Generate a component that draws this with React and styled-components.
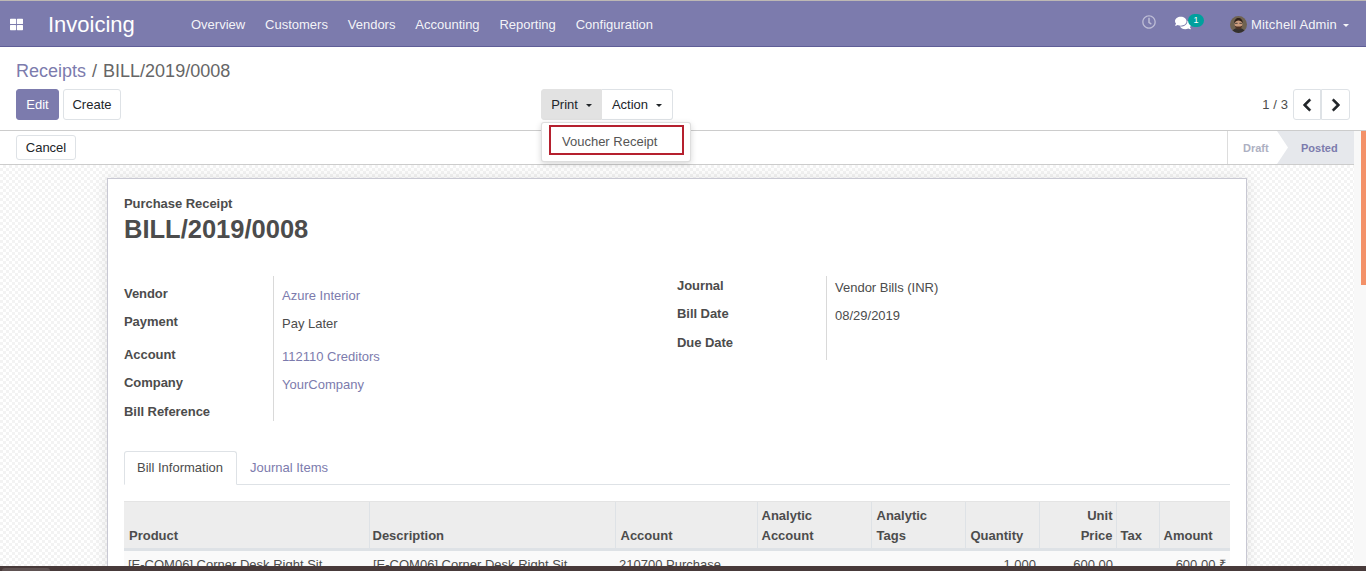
import React from "react";
import styled, { createGlobalStyle } from "styled-components";
import { FaThLarge, FaRegClock, FaComments, FaChevronLeft, FaChevronRight } from "react-icons/fa";

const Global = createGlobalStyle`
  html, body { margin: 0; padding: 0; height: 100%; overflow: hidden; }
  body { font-family: "Liberation Sans", Arial, sans-serif; font-size: 13px; color: #4c4c4c; background: #fff; }
  #root { height: 571px; }
  * { box-sizing: border-box; }
`;

const Page = styled.div`
  height: 571px; display: flex; flex-direction: column; overflow: hidden;
  border-top: 1px solid #bdb8b4;
`;
const Navbar = styled.header`
  height: 46px; flex: none; background: #7c7bad; border-bottom: 1px solid #5f5e97;
  display: flex; align-items: center; color: #fff; padding: 2px 0 0 10px;
`;
const AppsIcon = styled.span`
  width: 13px; display: flex; color: #fff; font-size: 13px; margin-right: 25px;
`;
const Brand = styled.span`
  font-size: 22px; width: 143px; line-height: 1; color: #fff;
`;
const NavMenu = styled.nav`display: flex; gap: 19.85px;`;
const NavLink = styled.span`color: rgba(255,255,255,.93); line-height: 18px;`;
const NavRight = styled.div`margin-left: auto; display: flex; align-items: center; padding-right: 17px;`;
const Clock = styled.span`display: flex; font-size: 14px; color: rgba(255,255,255,.5); margin: 0 19px 6px 0;`;
const Messages = styled.span`position: relative; display: flex; font-size: 16px; color: #fff; margin: 0 39px 4px 0;`;
const Badge = styled.span`
  position: absolute; left: 13px; top: -1px; width: 16px; height: 13px; border-radius: 7px;
  background: #00a09d; color: #fff; font-size: 9px; line-height: 13px; text-align: center;
`;
const Avatar = styled.svg`width: 17px; height: 17px; border-radius: 50%; margin-right: 4px; flex: none;`;
const UserName = styled.span`color: rgba(255,255,255,.93); letter-spacing: .15px;`;
const Caret = styled.span`
  display: inline-block; margin-left: ${p => p.$gap || 8}px; border-top: 3.5px solid currentColor;
  border-left: 3.5px solid transparent; border-right: 3.5px solid transparent; vertical-align: 2px;
`;

const ControlPanel = styled.section`
  height: 84px; flex: none; border-bottom: 1px solid #ccc; padding: 12px 16px 0; position: relative;
`;
const Breadcrumb = styled.div`font-size: 18px; line-height: 24px; color: #666; white-space: pre;`;
const CrumbLink = styled.span`color: #7c7bad;`;
const CrumbSep = styled.span`padding: 0 1px;`;
const ButtonRow = styled.div`display: grid; grid-template-columns: 525px 1fr auto; margin-top: 6px; align-items: center;`;
const ButtonGroup = styled.div`display: flex; gap: 4px;`;
const Btn = styled.button`
  font: inherit; height: 31px; padding: 0; border-radius: 3px; cursor: pointer;
  width: ${p => p.$w}px;
  border: 1px solid ${p => (p.$primary ? "#7c7bad" : "#dee2e6")};
  background: ${p => (p.$primary ? "#7c7bad" : "#fff")};
  color: ${p => (p.$primary ? "#fff" : "#212529")};
`;
const ActionGroup = styled.div`display: flex; position: relative; width: 132px;`;
const ActionBtn = styled.button`
  font: inherit; height: 31px; padding: 0 9px; cursor: pointer; color: #212529;
  border: 1px solid ${p => (p.$active ? "#e2e2e2" : "#dee2e6")};
  background: ${p => (p.$active ? "#e2e2e2" : "#fff")};
  border-radius: ${p => (p.$active ? "3px 0 0 3px" : "0 3px 3px 0")};
  ${p => !p.$active && "border-left: 0; flex: 1;"}
  ${p => p.$active && "width: 61px;"}
`;
const Menu = styled.div`
  position: absolute; left: 0; top: 33px; width: 150px; height: 40px; background: #fff; z-index: 5;
  border: 1px solid rgba(0,0,0,.13); border-radius: 3px; padding: 2px 6px 0 7px;
  box-shadow: 0 2px 6px rgba(0,0,0,.16);
`;
const MenuItem = styled.div`
  height: 30px; border: 2px solid #b5202e; line-height: 29px; padding-left: 11px; color: #555;
  width: 135px;
`;
const Pager = styled.div`grid-column: 3; display: flex; align-items: center;`;
const PagerText = styled.span`margin-right: 5px; color: #4c4c4c; letter-spacing: .1px;`;
const PagerBtn = styled.button`
  width: ${p => (p.$left ? 28 : 29)}px; height: 31px; padding: 0; background: #fff; border: 1px solid #dee2e6; cursor: pointer;
  color: #212529; font-size: 14px; display: flex; align-items: center; justify-content: center;
  border-radius: ${p => (p.$left ? "3px 0 0 3px" : "0 3px 3px 0")};
  svg { stroke: currentColor; stroke-width: 24; }
`;

const Body = styled.div`flex: 1; min-height: 0; display: flex;`;
const Main = styled.main`flex: 1; min-width: 0; display: flex; flex-direction: column; overflow: hidden;`;
const StatusBar = styled.div`
  height: 34px; flex: none; border-bottom: 1px solid #ccc; display: flex; justify-content: space-between;
  align-items: center; padding-left: 16px; background: #fff;
`;
const CancelBtn = styled(Btn)`height: 25px;`;
const Status = styled.div`display: flex; height: 33px; font-size: 11px; font-weight: 700;`;
const StatusItem = styled.div`
  position: relative; display: flex; align-items: center;
  ${p => p.$current
    ? "width: 77px; padding-left: 24px; background: #e6e8ec; color: #7c7bad;"
    : `width: 50px; padding-left: 15px; border-left: 1px solid #ddd; color: #adb0c2;
       &::after { content: ""; position: absolute; left: 49px; top: 0; bottom: 0; width: 11px;
         background: #fff; clip-path: polygon(0 0, 100% 50%, 0 100%); z-index: 1; }`}
`;
const Canvas = styled.div`
  flex: 1; min-height: 0; overflow: hidden; padding: 13px 107px 0; 
  background: repeating-conic-gradient(#f3f3f3 0 25%, #fff 0 50%) 0 0 / 6px 6px;
`;
const Sheet = styled.div`
  width: 1140px; height: 500px; background: #fff; border: 1px solid #c8c8d3; padding: 16px;
  box-shadow: 0 0 14px rgba(0,0,0,.1);
`;
const Kind = styled.div`font-weight: 700; line-height: 18px; letter-spacing: -.05px;`;
const Title = styled.h1`margin: 1px 0 0; font-size: 25.5px; line-height: 30px; font-weight: 700; color: #4c4c4c;`;
const Groups = styled.div`display: grid; grid-template-columns: 553px 1fr; margin-top: 32px;`;
const Group = styled.div`
  display: grid; grid-template-columns: 149px 1fr; align-self: start;
  padding-top: ${p => p.$pad}px;
  position: relative;
`;
const Line = styled.div`
  position: absolute; left: 149px; top: 0; bottom: 0; width: 1px; background: #d9d9d9;
`;
const Label = styled.div`font-weight: 700; height: ${p => p.$h}px; line-height: 18px; letter-spacing: -.05px;`;
const Value = styled.div`
  height: ${p => p.$h}px; padding: 2px 0 0 9px; line-height: 18px;
  color: ${p => (p.$link ? "#7c7bad" : "#4c4c4c")};
`;
const Tabs = styled.div`display: flex; margin-top: 30px; border-bottom: 1px solid #dee2e6; height: 34px;`;
const Tab = styled.div`
  height: 34px;
  ${p => p.$active
    ? "padding: 0 12px; line-height: 31px; border: 1px solid #dee2e6; border-bottom-color: #fff; border-radius: 3px 3px 0 0; background: #fff; color: #4c4c4c; width: 113px;"
    : "padding: 0 13px; line-height: 33px; color: #7c7bad;"}
`;
const Table = styled.table`
  width: 1106px; margin-top: 16px; border-collapse: collapse; table-layout: fixed; font-size: 13px;
`;
const Th = styled.th`
  background: #ededed; height: 48px; padding: 0 3px 2px ${p => p.$pl || 5}px; vertical-align: bottom; font-weight: 700;
  line-height: 20px; color: #4c4c4c; border-left: 1px solid #dee2e6; border-top: 1px solid #e4e4e4;
  border-bottom: 3px solid #dee2e6;
  text-align: ${p => (p.$right ? "right" : "left")};
  &:first-child { border-left: 0; }
`;
const Td = styled.td`
  background: #fafafa; padding: 5px ${p => p.$pr || 3}px 0 4px; line-height: 18px; white-space: nowrap; overflow: hidden; vertical-align: top;
  color: #4c4c4c;
  text-align: ${p => (p.$right ? "right" : "left")};
`;
const Scrollbar = styled.div`width: 12px; flex: none; background: #f8f8f8; display: flex; justify-content: flex-end;`;
const Thumb = styled.div`width: 5px; height: 154px; background: #f39168;`;
const BottomBar = styled.div`
  height: 5px; flex: none; background: #483a3a; position: relative; z-index: 2;
`;
const BottomTab = styled.div`
  position: absolute; left: 2px; top: 2px; width: 48px; height: 3px; background: #5f5252; border-radius: 3px 3px 0 0;
`;

const cols = [245, 246, 142, 114, 94, 74, 77, 43, 71];
const left = [
  ["Vendor", "Azure Interior", true, 28],
  ["Payment", "Pay Later", false, 33],
  ["Account", "112110 Creditors", true, 28],
  ["Company", "YourCompany", true, 29],
  ["Bill Reference", "", false, 18],
];
const right = [
  ["Journal", "Vendor Bills (INR)", false, 28],
  ["Bill Date", "08/29/2019", false, 29],
  ["Due Date", "", false, 26],
];

const FieldGroup = ({ rows, pad }) => (
  <Group $pad={pad}>
    <Line />
    {rows.map(([l, v, link, h]) => (
      <React.Fragment key={l}>
        <Label $h={h}>{l}</Label>
        <Value $h={h} $link={link}>{v}</Value>
      </React.Fragment>
    ))}
  </Group>
);

export default function App() {
  return (
    <Page>
      <Global />
      <Navbar>
        <AppsIcon><FaThLarge /></AppsIcon>
        <Brand>Invoicing</Brand>
        <NavMenu>
          {["Overview", "Customers", "Vendors", "Accounting", "Reporting", "Configuration"].map(n => <NavLink key={n}>{n}</NavLink>)}
        </NavMenu>
        <NavRight>
          <Clock><FaRegClock /></Clock>
          <Messages><FaComments /><Badge>1</Badge></Messages>
          <Avatar viewBox="0 0 17 17">
            <rect width="17" height="17" fill="#6f6250" />
            <path d="M2 17c0-3.500 3-5 6.500-5s6.500 1.500 6.500 5z" fill="#33302e" />
            <ellipse cx="8.500" cy="8" rx="3.900" ry="5" fill="#c99a7c" />
            <path d="M4.600 9c.5 3 2 4.500 3.900 4.500s3.400-1.500 3.900-4.500c-.6 1.200-1.500 1.500-3.900 1.500S5.200 10.200 4.600 9z" fill="#4a3226" />
            <path d="M4.300 7.500c-.4-3.500 2-5.500 4.200-5.500s4.600 2 4.200 5.500c-1-2.300-2.600-3-4.200-3s-3.200.7-4.200 3z" fill="#2f2019" />
            <path d="M5 7.300h2.600M9.400 7.300H12" stroke="#2a2a2a" strokeWidth=".8" />
          </Avatar>
          <UserName>Mitchell Admin<Caret $gap={6} /></UserName>
        </NavRight>
      </Navbar>
      <ControlPanel>
        <Breadcrumb><CrumbLink>Receipts</CrumbLink> <CrumbSep>/</CrumbSep> BILL/2019/0008</Breadcrumb>
        <ButtonRow>
          <ButtonGroup>
            <Btn $primary $w={43}>Edit</Btn>
            <Btn $w={58}>Create</Btn>
          </ButtonGroup>
          <ActionGroup>
            <ActionBtn $active>Print<Caret /></ActionBtn>
            <ActionBtn>Action<Caret /></ActionBtn>
            <Menu><MenuItem>Voucher Receipt</MenuItem></Menu>
          </ActionGroup>
          <Pager>
            <PagerText>1 / 3</PagerText>
            <PagerBtn $left><FaChevronLeft /></PagerBtn>
            <PagerBtn><FaChevronRight /></PagerBtn>
          </Pager>
        </ButtonRow>
      </ControlPanel>
      <Body>
        <Main>
          <StatusBar>
            <CancelBtn $w={60}>Cancel</CancelBtn>
            <Status>
              <StatusItem>Draft</StatusItem>
              <StatusItem $current>Posted</StatusItem>
            </Status>
          </StatusBar>
          <Canvas>
            <Sheet>
              <Kind>Purchase Receipt</Kind>
              <Title>BILL/2019/0008</Title>
              <Groups>
                <FieldGroup rows={left} pad={9} />
                <FieldGroup rows={right} pad={1} />
              </Groups>
              <Tabs>
                <Tab $active>Bill Information</Tab>
                <Tab>Journal Items</Tab>
              </Tabs>
              <Table>
                <colgroup>{cols.map((w, i) => <col key={i} style={{ width: w }} />)}</colgroup>
                <thead>
                  <tr>
                    <Th>Product</Th>
                    <Th $pl={3}>Description</Th>
                    <Th>Account</Th>
                    <Th $pl={4}>Analytic<br />Account</Th>
                    <Th>Analytic<br />Tags</Th>
                    <Th>Quantity</Th>
                    <Th $right>Unit<br />Price</Th>
                    <Th $pl={4}>Tax</Th>
                    <Th $pl={4}>Amount</Th>
                  </tr>
                </thead>
                <tbody>
                  <tr>
                    <Td>[E-COM06] Corner Desk Right Sit</Td>
                    <Td>[E-COM06] Corner Desk Right Sit</Td>
                    <Td>210700 Purchase</Td>
                    <Td />
                    <Td />
                    <Td $right>1.000</Td>
                    <Td $right>600.00</Td>
                    <Td />
                    <Td $right $pr={4}>600.00 ₹</Td>
                  </tr>
                </tbody>
              </Table>
            </Sheet>
          </Canvas>
        </Main>
        <Scrollbar><Thumb /></Scrollbar>
      </Body>
      <BottomBar><BottomTab /></BottomBar>
    </Page>
  );
}
